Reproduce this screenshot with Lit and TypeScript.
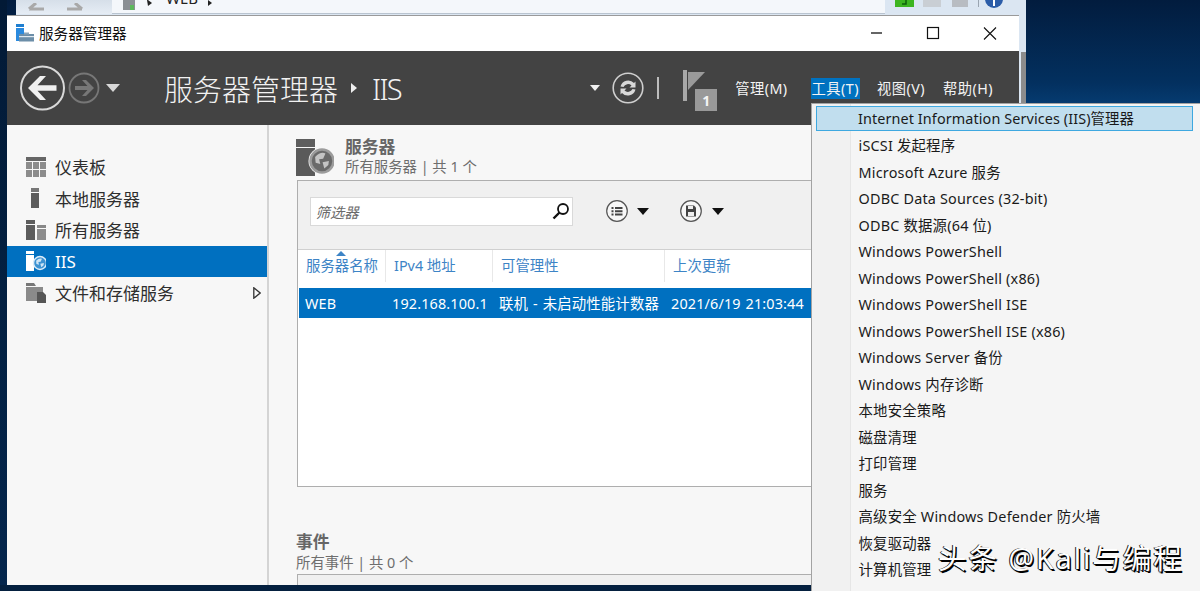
import { LitElement, html, css, svg } from "lit";
import { customElement } from "lit/decorators.js";

const MENU = [
  "Internet Information Services (IIS)管理器",
  "iSCSI 发起程序",
  "Microsoft Azure 服务",
  "ODBC Data Sources (32-bit)",
  "ODBC 数据源(64 位)",
  "Windows PowerShell",
  "Windows PowerShell (x86)",
  "Windows PowerShell ISE",
  "Windows PowerShell ISE (x86)",
  "Windows Server 备份",
  "Windows 内存诊断",
  "本地安全策略",
  "磁盘清理",
  "打印管理",
  "服务",
  "高级安全 Windows Defender 防火墙",
  "恢复驱动器",
  "计算机管理",
];

const globe = (cx: number, cy: number, r: number, ring: string, fill: string, land: string) => svg`
  <circle cx=${cx} cy=${cy} r=${r} fill=${fill} stroke=${ring} stroke-width=${r * 0.22}></circle>
  <path d="M${cx - r * 0.6} ${cy - r * 0.35}q${r * 0.5} ${-r * 0.5} ${r * 0.9} ${-r * 0.3}l${-r * 0.2} ${r * 0.45}l${-r * 0.35} ${r * 0.05}l${r * 0.1} ${r * 0.4}l${-r * 0.4} ${-r * 0.1}z M${cx + r * 0.05} ${cy + r * 0.1}l${r * 0.55} ${-r * 0.1}l${-r * 0.05} ${r * 0.35}l${-r * 0.35} ${r * 0.3}z" fill=${land}></path>`;

@customElement("app-root")
export class AppRoot extends LitElement {
  static styles = css`
    :host {
      display: block;
      position: relative;
      width: 1200px;
      height: 591px;
      overflow: hidden;
      background: linear-gradient(180deg, #021c3e 0%, #03305f 14%, #0a4f90 24%, #0a5a9c 100%);
      font-family: "Noto Sans", "Noto Sans CJK SC", sans-serif;
      color: #222;
    }
    .leftband {
      position: absolute;
      left: 0;
      right: 0;
      bottom: 0;
      height: 6px;
      background: #04203f;
    }
    .leftstrip {
      position: absolute;
      left: 0;
      top: 0;
      bottom: 0;
      width: 7px;
      background: linear-gradient(180deg, #021a36, #04264d);
    }
    /* window behind */
    .back {
      position: absolute;
      left: 16px;
      top: 0;
      width: 1010px;
      height: 120px;
      background: #dbe6f2;
      display: flex;
      align-items: flex-start;
    }
    .back-nav {
      width: 96px;
      height: 14px;
      background: linear-gradient(180deg, #d6dfe9, #e6edf5);
    }
    .back-addr {
      width: 773px;
      height: 13px;
      background: #f4f7fb;
      border-bottom: 1px solid #b9c4d0;
      display: flex;
      align-items: flex-end;
      font-size: 15px;
      line-height: 14px;
      color: #222;
      overflow: hidden;
    }
    .back-addr svg {
      flex: none;
      margin-bottom: 0;
    }
    .web {
      margin-left: 8px;
      margin-right: 8px;
      position: relative;
      top: -8px;
    }
    .back-tools {
      flex: 1;
    }
    .back-tools svg {
      display: block;
    }
    .scroll {
      position: absolute;
      left: 1021px;
      top: 52px;
      width: 5px;
      height: 51px;
      background: #8c8c8c;
    }

    /* main window */
    .win {
      position: absolute;
      left: 7px;
      top: 15px;
      width: 1012px;
      height: 570px;
      background: #f7f7f7;
      display: flex;
      flex-direction: column;
      overflow: hidden;
    }
    .titlebar {
      height: 36px;
      flex: none;
      box-sizing: border-box;
      border-top: 1px solid #9a9a9a;
      background: #fff;
      display: flex;
      align-items: center;
      padding: 0 12px 2px 9px;
      font-size: 14.6px;
      color: #111;
    }
    .titlebar .t {
      margin-left: 5px;
    }
    .ctrls {
      margin-left: auto;
      display: flex;
    }
    .ctrls svg {
      display: block;
    }
    .cmd {
      height: 74px;
      flex: none;
      background: #434343;
      display: flex;
      align-items: center;
      padding: 0 25px 0 13px;
      color: #fff;
    }
    .cmd svg {
      display: block;
      flex: none;
    }
    .crumb {
      margin-left: 44px;
      font-size: 29px;
      font-weight: 300;
      color: #f2f2f2;
      display: flex;
      align-items: center;
      white-space: nowrap;
    }
    .crumb .sep {
      width: 0;
      height: 0;
      border-left: 6px solid #eee;
      border-top: 5px solid transparent;
      border-bottom: 5px solid transparent;
      margin: 0 15px 0 13px;
    }
    .crumb .leaf {
      letter-spacing: -1.6px;
    }
    .spacer {
      flex: 1;
    }
    .flagbox {
      position: relative;
      width: 34px;
      height: 41px;
      margin: 5px 17px 0 23px;
    }
    .badge {
      position: absolute;
      left: 12px;
      top: 19px;
      width: 22px;
      height: 22px;
      background: #999;
      color: #f4f4f4;
      font-size: 14px;
      font-weight: 700;
      text-align: center;
      line-height: 23px;
    }
    .mb {
      display: flex;
      align-items: center;
      gap: 16px;
      font-size: 14.3px;
      letter-spacing: 0.45px;
      color: #f4f4f4;
      white-space: nowrap;
    }
    .mb span {
      padding: 0 1px;
      line-height: 21px;
      height: 21px;
    }
    .mb span:first-child {
      margin-right: 6px;
    }
    .mb .on {
      background: #0072c0;
    }
    .body {
      flex: 1;
      display: flex;
      min-height: 0;
    }
    .side {
      width: 260px;
      flex: none;
      box-sizing: border-box;
      padding-top: 26px;
      border-right: 0;
      font-size: 17px;
      color: #2e2e2e;
    }
    .side .row {
      height: 31.5px;
      display: flex;
      align-items: center;
      padding-left: 19px;
      gap: 9px;
      position: relative;
    }
    .side .row svg {
      flex: none;
      display: block;
    }
    .side .row.sel {
      background: #0070c0;
      color: #fff;
    }
    .side .row .more {
      position: absolute;
      right: 6px;
      top: 10px;
    }
    .content {
      flex: 1;
      min-width: 0;
      border-left: 2px solid #d4d4d4;
      padding: 0 0 0 28px;
      display: flex;
      flex-direction: column;
    }
    .head {
      display: flex;
      flex: none;
      height: 55px;
      align-items: flex-start;
      padding-top: 12px;
      box-sizing: border-box;
      margin-left: -1px;
    }
    .head svg {
      flex: none;
      display: block;
      margin-top: 2px;
    }
    .head .txt {
      margin-left: 11px;
    }
    h2 {
      margin: 0;
      font-size: 16.8px;
      line-height: 20px;
      font-weight: 700;
      color: #666;
    }
    .sub {
      font-size: 14.4px;
      line-height: 20px;
      color: #6e6e6e;
    }
    .panel {
      width: 712px;
      height: 307px;
      box-sizing: border-box;
      border: 1.5px solid #aeaeae;
      background: #fff;
      flex: none;
    }
    .tools {
      height: 69px;
      box-sizing: border-box;
      background: #f0f0f0;
      border-bottom: 1px solid #d0d0d0;
      display: flex;
      align-items: center;
      padding: 0 0 8px 11.5px;
    }
    .tools svg {
      display: block;
      flex: none;
    }
    .filter {
      width: 263px;
      height: 29px;
      box-sizing: border-box;
      background: #fff;
      border: 1.5px solid #d9d9d9;
      display: flex;
      align-items: center;
      justify-content: space-between;
      padding: 0 2px 0 5px;
      margin-right: 33px;
      font-size: 14.4px;
      font-style: italic;
      color: #6a6a6a;
    }
    .ddarrow {
      width: 0;
      height: 0;
      border-top: 7px solid #111;
      border-left: 6.5px solid transparent;
      border-right: 6.5px solid transparent;
      margin-left: 9.5px;
      margin-right: 31px;
    }
    .grid {
      display: grid;
      grid-template-columns: 86px 107px 172px 1fr;
      white-space: nowrap;
    }
    .ths {
      height: 38px;
      font-size: 14.4px;
      color: #3d84c6;
      position: relative;
      margin-left: 1px;
      align-items: start;
    }
    .ths div {
      height: 26px;
      padding: 6px 0 0 8px;
      line-height: 20px;
      border-left: 1px solid #e8e8e8;
    }
    .ths div:first-of-type {
      border-left: 0;
      padding-left: 7px;
    }
    .sort {
      position: absolute;
      left: 37px;
      top: 1px;
      width: 0;
      height: 0;
      border-bottom: 5px solid #3d84c6;
      border-left: 5px solid transparent;
      border-right: 5px solid transparent;
    }
    .tr {
      height: 30px;
      background: #0070c0;
      color: #fff;
      font-size: 14.4px;
      letter-spacing: 0.15px;
      word-spacing: 1px;
      align-items: center;
      margin-left: 1px;
    }
    .tr div {
      padding-left: 7px;
      line-height: 29px;
    }
    .tr div:first-child {
      padding-left: 6px;
    }
    .events {
      flex: none;
      margin-top: 45px;
      margin-left: -1px;
    }
    .events .sub {
      margin-top: 1px;
    }
    .panel2 {
      flex: none;
      height: 20px;
      width: 712px;
      margin-top: 1px;
      box-sizing: border-box;
      border: 1.5px solid #aeaeae;
      background: #f0f0f0;
    }
    /* dropdown menu */
    .menu {
      position: absolute;
      left: 811px;
      top: 103px;
      width: 400px;
      height: 500px;
      box-sizing: border-box;
      border: 1.5px solid #a3a3a3;
      background: linear-gradient(90deg, #f1f1f1 0 38px, #e6e6e6 38px 39px, #f5f5f5 39px);
      padding: 1.5px 0 0 3.5px;
      font-size: 14.4px;
      letter-spacing: 0.2px;
      color: #1a1a1a;
    }
    .menu .it {
      width: 377px;
      height: 26.5px;
      line-height: 25px;
      box-sizing: border-box;
      padding: 1px 0 0 43px;
      white-space: nowrap;
    }
    .menu .it.hot {
      background: #c1deee;
      border: 1.5px solid #3ea8e0;
      line-height: 22px;
      height: 25.5px;
      letter-spacing: 0.1px;
      padding: 1px 0 0 41.5px;
      margin-bottom: 1px;
    }
    .wm {
      position: absolute;
      left: 938px;
      top: 539px;
      font-size: 28.5px;
      letter-spacing: 2px;
      line-height: 38px;
      color: #fff;
      white-space: nowrap;
      text-shadow: 1.5px 1.5px 0 #000, -1px 0 0 #222, 0 1px 1px #000;
    }
  `;

  render() {
    return html`
      <div class="leftstrip"></div>
      <div class="leftband"></div>
      <div class="back">
        <div class="back-nav">
          <svg width="96" height="14" viewBox="0 0 96 14">
            <path d="M13 6l7-6M13 6h15M51 6h15M66 6l-7-6" fill="none" stroke="#a9a9a9" stroke-width="3"></path>
          </svg>
        </div>
        <div class="back-addr">
          <svg width="46" height="13" viewBox="0 0 46 13">
            <rect x="11" y="0" width="12" height="10" fill="#8a8f94"></rect>
            <rect x="18" y="5" width="4" height="5" fill="#5cb85c"></rect>
            <path d="M35 0h1l4 3-4 3z" fill="#222"></path>
          </svg>
          <span class="web">WEB</span>
          <svg width="14" height="13" viewBox="0 0 14 13"><path d="M2 0l4 3-4 3z" fill="#222"></path></svg>
        </div>
        <div class="back-tools">
          <svg width="141" height="15" viewBox="0 0 141 15">
            <rect x="10" y="0" width="19" height="7" fill="#3cb520"></rect>
            <path d="M21 0v4h-4" fill="none" stroke="#0d5f0a" stroke-width="1.500"></path>
            <rect x="38" y="0" width="18" height="7" fill="#c9ced4"></rect>
            <rect x="67" y="0" width="16" height="7" fill="#b8bcc2"></rect>
            <rect x="93" y="0" width="1" height="7" fill="#9aa5b1"></rect>
            <circle cx="109" cy="-1" r="9" fill="#2c5da8"></circle>
            <rect x="108" y="0" width="2" height="6" fill="#fff"></rect>
          </svg>
        </div>
      </div>
      <div class="scroll"></div>

      <div class="win">
        <div class="titlebar">
          <svg width="18" height="18" viewBox="0 0 18 18">
            <rect x="0" y="0" width="8" height="3" fill="#1f7fd0"></rect>
            <rect x="0" y="4" width="8" height="13" fill="#2a8ade"></rect>
            <rect x="3" y="10" width="15" height="7.5" fill="#6c8ea8"></rect>
            <rect x="3" y="12" width="15" height="1.2" fill="#dfe8ef"></rect>
            <rect x="8" y="8.5" width="5" height="2" fill="#8aa4b8"></rect>
          </svg>
          <span class="t">服务器管理器</span>
          <div class="ctrls">
            <svg width="170" height="34" viewBox="0 0 170 34">
              <path d="M34 17h11" stroke="#111" stroke-width="1.3"></path>
              <rect x="90.5" y="11.5" width="11" height="11" fill="none" stroke="#111" stroke-width="1.2"></rect>
              <path d="M147 11.5l12 12M159 11.5l-12 12" stroke="#111" stroke-width="1.1"></path>
            </svg>
          </div>
        </div>
        <div class="cmd">
          <svg width="46" height="46" viewBox="0 0 46 46">
            <circle cx="22.5" cy="23" r="21.5" fill="none" stroke="#d9d9d9" stroke-width="2"></circle>
            <path d="M8 23l12-12h6l-8.500 9.200h19v5.600h-19l8.500 9.200h-6z" fill="#f0f0f0"></path>
          </svg>
          <svg width="32" height="32" viewBox="0 0 32 32" style="margin-left:2px">
            <circle cx="16" cy="16" r="14.500" fill="none" stroke="#777" stroke-width="1.800"></circle>
            <path d="M26 16l-8-8h-4l5.500 6h-12.500v4h12.500l-5.500 6h4z" fill="#777"></path>
          </svg>
          <svg width="14" height="8" viewBox="0 0 14 8" style="margin-left:6px"><path d="M0 0h14l-7 8z" fill="#d8d8d8"></path></svg>
          <div class="crumb">服务器管理器<span class="sep"></span><span class="leaf">IIS</span></div>
          <div class="spacer"></div>
          <svg width="10" height="6" viewBox="0 0 10 6" style="margin-right:12px"><path d="M0 0h10l-5 6z" fill="#f0f0f0"></path></svg>
          <svg width="32" height="32" viewBox="0 0 32 32">
            <circle cx="16" cy="16" r="14.800" fill="none" stroke="#cfcfcf" stroke-width="1.600"></circle>
            <path d="M8.500 14.500a8 8 0 0 1 13.500-3.500l1.500-1.500v6h-6l2-2a5 5 0 0 0-8 1.500z" fill="#d8d8d8"></path>
            <path d="M23.500 17.500a8 8 0 0 1-13.500 3.500l-1.500 1.500v-6h6l-2 2a5 5 0 0 0 8-1.500z" fill="#d8d8d8"></path>
          </svg>
          <svg width="3" height="22" viewBox="0 0 3 22" style="margin-left:13px"><rect x="0" y="0" width="2" height="22" fill="#bdbdbd"></rect></svg>
          <div class="flagbox">
            <svg width="22" height="31" viewBox="0 0 22 31">
              <rect x="0" y="0" width="4" height="31" fill="#a8a8a8"></rect>
              <path d="M5 2h17l-17 18z" fill="#9a9a9a"></path>
            </svg>
            <div class="badge">1</div>
          </div>
          <div class="mb">
            <span>管理(M)</span>
            <span class="on">工具(T)</span>
            <span>视图(V)</span>
            <span>帮助(H)</span>
          </div>
        </div>
        <div class="body">
          <div class="side">
            <div class="row">
              <svg width="20" height="20" viewBox="0 0 20 20">
                <rect x="0" y="0" width="20" height="4" fill="#666"></rect>
                <path d="M0 5h6v7h-6zM7 5h6v7h-6zM14 5h6v7h-6zM0 13h6v7h-6zM7 13h6v7h-6zM14 13h6v7h-6z" fill="#8c8c8c"></path>
              </svg>
              <span>仪表板</span>
            </div>
            <div class="row">
              <svg width="20" height="20" viewBox="0 0 20 20">
                <rect x="5" y="0" width="8" height="4" fill="#777"></rect>
                <rect x="5" y="5" width="8" height="15" fill="#5c5c5c"></rect>
              </svg>
              <span>本地服务器</span>
            </div>
            <div class="row">
              <svg width="20" height="20" viewBox="0 0 20 20">
                <rect x="0" y="0" width="9" height="4" fill="#5c5c5c"></rect>
                <rect x="0" y="5" width="9" height="15" fill="#5c5c5c"></rect>
                <rect x="11" y="5" width="9" height="3" fill="#888"></rect>
                <rect x="11" y="9" width="9" height="11" fill="#8c8c8c"></rect>
              </svg>
              <span>所有服务器</span>
            </div>
            <div class="row sel">
              <svg width="20" height="20" viewBox="0 0 20 20">
                <rect x="0" y="0" width="8" height="3" fill="#fff"></rect>
                <rect x="0" y="4" width="8" height="16" fill="#fff"></rect>
                ${globe(14, 12, 6.5, "#dcecf8", "#3d93d2", "#cfe5f5")}
              </svg>
              <span>IIS</span>
            </div>
            <div class="row">
              <svg width="20" height="20" viewBox="0 0 20 20">
                <path d="M0 0h8l2 3h-10z" fill="#777"></path>
                <rect x="0" y="4" width="17" height="14" fill="#8a8a8a"></rect>
                <path d="M11 9h6l3 3v8h-9z" fill="#555"></path>
              </svg>
              <span>文件和存储服务</span>
              <svg class="more" width="8" height="12" viewBox="0 0 8 12"><path d="M.8.800l6.400 5.200-6.400 5.200z" fill="none" stroke="#333" stroke-width="1.300"></path></svg>
            </div>
          </div>
          <div class="content">
            <div class="head">
              <svg width="38" height="37" viewBox="0 0 38 37">
                <rect x="0" y="0" width="19" height="8" fill="#5e5e5e"></rect>
                <rect x="0" y="9" width="19" height="28" fill="#5a5a5a"></rect>
                <circle cx="26" cy="22" r="13.500" fill="#f7f7f7"></circle>
                ${globe(26, 22, 11.5, "#9c9c9c", "#6a6a6a", "#c4c4c4")}
              </svg>
              <div class="txt">
                <h2>服务器</h2>
                <div class="sub">所有服务器 | 共 1 个</div>
              </div>
            </div>
            <div class="panel">
              <div class="tools">
                <div class="filter">
                  <span>筛选器</span>
                  <svg width="18" height="18" viewBox="0 0 18 18">
                    <circle cx="11" cy="7" r="5" fill="none" stroke="#111" stroke-width="1.800"></circle>
                    <path d="M7.500 10.500l-6 6" stroke="#111" stroke-width="2.400"></path>
                  </svg>
                </div>
                <svg width="22" height="22" viewBox="0 0 22 22">
                  <circle cx="11" cy="11" r="10.300" fill="#f7f7f7" stroke="#555" stroke-width="1.200"></circle>
                  <path d="M5.500 7h2v2h-2zM9 7h7.500v2h-7.500zM5.500 10.200h2v2h-2zM9 10.200h7.500v2h-7.500zM5.500 13.400h2v2h-2zM9 13.400h7.500v2h-7.500z" fill="#444"></path>
                </svg>
                <div class="ddarrow"></div>
                <svg width="22" height="22" viewBox="0 0 22 22">
                  <circle cx="11" cy="11" r="10.300" fill="#f7f7f7" stroke="#555" stroke-width="1.200"></circle>
                  <path d="M6 5.500h8l2 2v9h-10z" fill="#444"></path>
                  <rect x="8" y="6" width="5" height="3" fill="#eee"></rect>
                  <rect x="8" y="12" width="6" height="4" fill="#eee"></rect>
                </svg>
                <div class="ddarrow"></div>
              </div>
              <div class="grid ths">
                <span class="sort"></span>
                <div>服务器名称</div>
                <div>IPv4 地址</div>
                <div>可管理性</div>
                <div>上次更新</div>
              </div>
              <div class="grid tr">
                <div>WEB</div>
                <div>192.168.100.1</div>
                <div>联机 - 未启动性能计数器</div>
                <div>2021/6/19 21:03:44</div>
              </div>
            </div>
            <div class="events">
              <h2>事件</h2>
              <div class="sub">所有事件 | 共 0 个</div>
            </div>
            <div class="panel2"></div>
          </div>
        </div>
      </div>

      <div class="menu">
        ${MENU.map((m, i) => html`<div class="it ${i === 0 ? "hot" : ""}">${m}</div>`)}
      </div>
      <div class="wm">头条 @Kali与编程</div>
    `;
  }
}
